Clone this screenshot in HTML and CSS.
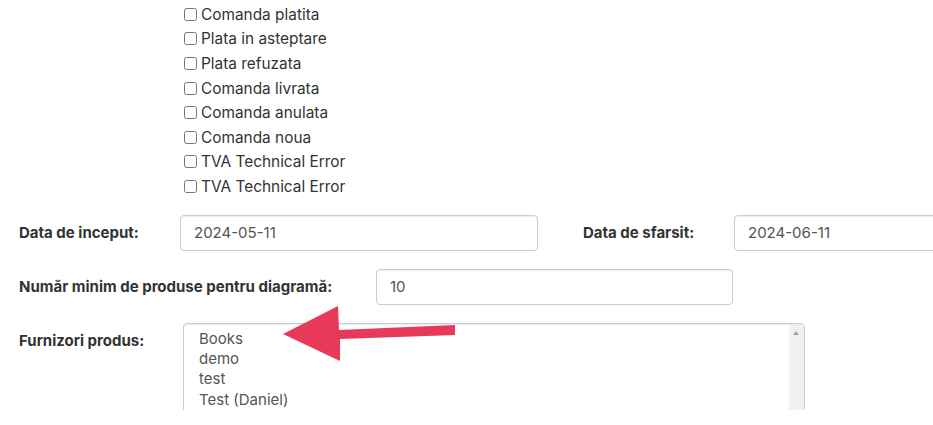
FILE: index.html
```html
<!DOCTYPE html>
<html>
  <head>
    <meta http-equiv="Content-Type" content="text/html;charset=utf-8" />
    <title>Raport comenzi</title>
    <link rel="stylesheet" href="styles.css">
  </head>
  <body>
    <div class="panel">
      <div class="statuses">
        <label class="check"><input type="checkbox" /> Comanda platita</label>
        <label class="check"><input type="checkbox" /> Plata in asteptare</label>
        <label class="check"><input type="checkbox" /> Plata refuzata</label>
        <label class="check"><input type="checkbox" /> Comanda livrata</label>
        <label class="check"><input type="checkbox" /> Comanda anulata</label>
        <label class="check"><input type="checkbox" /> Comanda noua</label>
        <label class="check"><input type="checkbox" /> TVA Technical Error</label>
        <label class="check"><input type="checkbox" /> TVA Technical Error</label>
      </div>

      <div class="row">
        <label class="lbl lbl-start" for="start">Data de inceput:</label>
        <input class="field" id="start" type="text" value="2024-05-11" />
        <label class="lbl lbl-end" for="end">Data de sfarsit:</label>
        <input class="field" id="end" type="text" value="2024-06-11" />
      </div>

      <div class="row">
        <label class="lbl lbl-min" for="min">Număr minim de produse pentru diagramă:</label>
        <input class="field" id="min" type="text" value="10" />
      </div>

      <div class="row row-top">
        <label class="lbl lbl-supp" for="supp">Furnizori produs:</label>
        <div class="supp-wrap">
          <select class="supp" id="supp" multiple size="8">
            <option>Books</option>
            <option>demo</option>
            <option>test</option>
            <option>Test (Daniel)</option>
            <option>Furnizor 1</option>
            <option>Furnizor 2</option>
            <option>Furnizor 3</option>
            <option>Furnizor 4</option>
            <option>Furnizor 5</option>
            <option>Furnizor 6</option>
          </select>
          <div class="scrollbar"><span class="scroll-up"></span></div>
          <svg class="arrow" width="180" height="60" viewBox="0 0 180 60">
            <polygon points="0,28 55,0 56,24 172,19 172,29 57,33 57,55" fill="#e8395b" />
          </svg>
        </div>
      </div>
    </div>
  </body>
</html>
```

FILE: styles.css
```css
html, body {
  margin: 0;
  overflow: hidden;
}

body {
  font-family: Inter, Roboto, sans-serif;
  font-size: 15px;
  color: #333;
  background: #fff;
}

.panel {
  height: 410px;
  overflow: hidden;
}

.statuses {
  padding: 2px 0 0 183px;
  margin-bottom: 16px;
}

.check {
  display: flex;
  align-items: center;
  height: 24.6px;
  font-size: 15.4px;
}

.check input {
  width: 13px;
  height: 13px;
  margin: 0 4px 0 1px;
}

.row {
  display: flex;
  align-items: center;
  padding-left: 19px;
  margin-bottom: 18px;
  white-space: nowrap;
}

.row-top {
  align-items: flex-start;
}

.lbl {
  flex-shrink: 0;
  font-weight: bold;
}

.lbl-start { width: 161px; }
.lbl-end { width: 151px; margin-left: 45px; }
.lbl-min { width: 357px; }
.lbl-supp { width: 164px; padding-top: 8px; }

.field {
  box-sizing: border-box;
  width: 358px;
  height: 36px;
  flex-shrink: 0;
  padding: 6px 13px;
  border: 1px solid #ccc;
  border-radius: 4px;
  font-family: inherit;
  font-size: 15px;
  color: #555;
  box-shadow: inset 0 1px 1px rgba(0, 0, 0, 0.075);
}

#min {
  width: 357px;
}

.supp-wrap {
  position: relative;
}

.supp {
  box-sizing: border-box;
  width: 622px;
  height: 170px;
  padding: 5px 12px 6px 15px;
  border: 1px solid #ccc;
  border-radius: 4px;
  font-family: inherit;
  font-size: 15px;
  color: #555;
  box-shadow: inset 0 1px 1px rgba(0, 0, 0, 0.075);
  outline: none;
}

.supp option {
  padding: 0;
  height: 20.3px;
  line-height: 20.3px;
}

.scrollbar {
  position: absolute;
  top: 2px;
  right: 1px;
  width: 15px;
  height: 160px;
  background: #f1f1f1;
}

.scroll-up {
  position: absolute;
  top: 6px;
  left: 4px;
  border-left: 3.5px solid transparent;
  border-right: 3.5px solid transparent;
  border-bottom: 4px solid #a3a3a3;
}

.arrow {
  position: absolute;
  left: 100px;
  top: -17px;
}
```
